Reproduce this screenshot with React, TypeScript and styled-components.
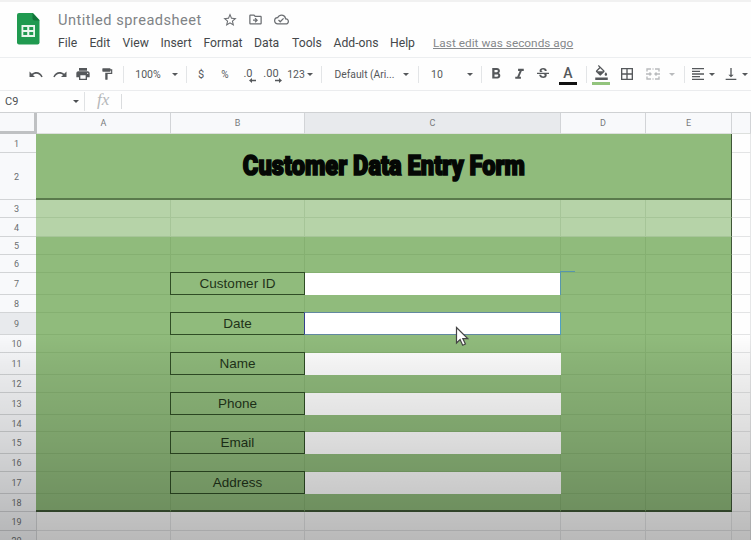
import React from 'react';
import styled, { createGlobalStyle, css } from 'styled-components';
import {
  MdPrint, MdFormatPaint, MdStarBorder, MdOutlineDriveFileMove, MdOutlineCloudDone,
  MdFormatBold, MdFormatItalic, MdStrikethroughS, MdFormatColorFill, MdBorderAll,
  MdFormatAlignLeft, MdVerticalAlignBottom,
} from 'react-icons/md';

const Global = createGlobalStyle`
  * { box-sizing: border-box; }
  body { margin: 0; background: #fff; overflow: hidden; font-family: Roboto, "Liberation Sans", sans-serif; }
`;

const Page = styled.div`
  position: relative;
  width: 751px;
  height: 540px;
  overflow: hidden;
  display: flex;
  flex-direction: column;
  background: #fefefe;
`;

const Header = styled.header`
  height: 58px;
  flex: none;
  display: flex;
  border-top: 2px solid #f1f1f1;
  border-bottom: 1px solid #eceef0;
`;
const LogoBox = styled.div`
  width: 58px;
  padding: 11px 0 0 17px;
`;
const HeaderText = styled.div`
  display: flex;
  flex-direction: column;
`;
const TitleRow = styled.div`
  display: flex;
  align-items: center;
  height: 25px;
  margin-top: 5px;
  color: #6b6e72;
`;
const DocTitle = styled.div`
  width: 164px;
  font-size: 14.6px;
  letter-spacing: 0.49px;
  color: #808386;
  white-space: nowrap;
`;
const TitleIcon = styled.span<{ $gap: number }>`
  display: flex;
  margin-right: ${p => p.$gap}px;
`;
const MenuRow = styled.nav`
  display: flex;
  height: 22px;
  align-items: center;
  font-size: 12.2px;
  color: #45484b;
`;
const MenuItem = styled.div<{ $w: number }>`
  width: ${p => p.$w}px;
  white-space: nowrap;
`;
const LastEdit = styled.div`
  font-size: 11.8px;
  letter-spacing: 0.02px;
  white-space: nowrap;
  color: #85888b;
  text-decoration: underline;
`;

const Toolbar = styled.div`
  height: 33px;
  flex: none;
  display: flex;
  align-items: center;
  padding-left: 24px;
  border-bottom: 1px solid #ebecee;
`;
const Slot = styled.div<{ $w: number; $size?: number; $faint?: boolean; $gap?: number }>`
  flex: none;
  width: ${p => p.$w}px;
  margin-left: ${p => p.$gap ?? 0}px;
  height: 30px;
  display: flex;
  align-items: center;
  justify-content: center;
  white-space: nowrap;
  font-size: ${p => p.$size ?? 11}px;
  color: ${p => (p.$faint ? '#b9bbbd' : '#55585b')};
  svg { flex: none; }
`;
const Separator = styled(Slot)`
  &::before { content: ''; width: 1px; height: 17px; background: #e3e5e7; }
`;
const Caret = styled.i`
  border: 3px solid transparent;
  border-top: 3.5px solid currentColor;
  border-bottom: 0;
`;
const Swatched = styled.div<{ $color: string }>`
  width: 18px;
  height: 21px;
  margin-top: 1px;
  display: flex;
  justify-content: center;
  align-items: center;
  font-size: 14px;
  font-weight: 500;
  padding-bottom: 1px;
  border-bottom: 3px solid ${p => p.$color};
`;
const Decimal = styled.div`
  display: flex;
  flex-direction: column;
  align-items: flex-end;
  line-height: 10px;
  padding-top: 4px;
  svg { margin: -1px -3px 0 0; }
`;

const FormulaBar = styled.div`
  height: 21px;
  flex: none;
  display: flex;
  align-items: center;
  font-size: 11px;
  color: #4c4f52;
`;
const NameBox = styled.div`
  width: 85px;
  height: 19px;
  display: flex;
  align-items: center;
  justify-content: space-between;
  padding: 0 5px 0 5px;
  border-right: 1px solid #e0e2e4;
`;
const Fx = styled.div`
  width: 37px;
  height: 15px;
  padding-left: 12px;
  border-right: 1px solid #dadcde;
  font: italic 17px/12px "Liberation Serif", serif;
  color: #b5b7b9;
`;

const COLUMNS = '37px 134px 134px 256px 85px 86px 19px';
const ColumnHeads = styled.div`
  height: 22px;
  flex: none;
  display: grid;
  grid-template-columns: ${COLUMNS};
  border-top: 1px solid #cfd1d3;
  background: #f8f9fb;
`;
const ColumnHead = styled.div<{ $active?: boolean; $corner?: boolean }>`
  display: flex;
  align-items: center;
  justify-content: center;
  font-size: 9px;
  color: #77797c;
  border-right: 1px solid #d2d4d7;
  border-bottom: 1px solid #dde0dd;
  ${p => p.$active && css`background: #e8eaed;`}
  ${p => p.$corner && css`border-right: 3px solid #bfc1c3; border-bottom: 3px solid #bfc1c3;`}
`;

const Sheet = styled.div`
  flex: none;
  display: grid;
  grid-template-columns: ${COLUMNS};
  grid-template-rows: 19px 47px 18px 19px 18px 18px 22px 18px 22px 18px 22px 18px 22px 17px 22px 18px 22px 18px 19px 19px;
`;
const RowHead = styled.div<{ $row: number; $active?: boolean }>`
  grid-column: 1;
  grid-row: ${p => p.$row};
  display: flex;
  align-items: center;
  justify-content: center;
  padding: 1px 3px 0 0;
  font-size: 9px;
  color: #6b6e70;
  background: ${p => (p.$active ? '#e8eaed' : '#f8f9fb')};
  border-bottom: 1px solid #d2d4d6;
  border-right: 1px solid #d8dadc;
`;
const FILLS = { green: '#90bb7c', light: '#b6d3a8', none: '#fefefe' };
const Cell = styled.div<{ $row: number; $col: number; $fill: keyof typeof FILLS }>`
  grid-column: ${p => p.$col};
  grid-row: ${p => p.$row};
  background: ${p => FILLS[p.$fill]};
  border-right: 1px solid ${p => (p.$fill === 'none' ? '#e6e7e8' : 'rgba(55, 95, 45, .12)')};
  border-bottom: 1px solid ${p => (p.$fill === 'none' ? '#e3e4e5' : 'rgba(55, 95, 45, .12)')};
  ${p => p.$col === 2 && p.$fill !== 'none' && css`margin-left: -1px;`}
  ${p => p.$col === 6 && p.$fill !== 'none' && css`border-right: 1.5px solid #3f5737;`}
  ${p => p.$row === 18 && p.$fill !== 'none' && css`border-bottom: 2px solid #3f5836;`}
`;
const Banner = styled.div`
  grid-column: 2 / 7;
  grid-row: 1 / 3;
  display: flex;
  align-items: center;
  justify-content: center;
  margin-left: -1px;
  background: #90bb7c;
  border-bottom: 2px solid #5a7a4c;
  border-right: 1.5px solid #3f5737;
`;
const BannerText = styled.h1`
  margin: 0 -20px;
  font: 900 28px/32px Roboto, "Liberation Sans", sans-serif;
  color: #050805;
  white-space: nowrap;
  -webkit-text-stroke: 1.7px #050805;
  transform: scaleX(0.845);
`;
const LabelCell = styled.div<{ $row: number }>`
  grid-column: 3;
  grid-row: ${p => p.$row};
  display: flex;
  align-items: center;
  justify-content: center;
  margin: -1px 0 0 -1px;
  border: 1.5px solid #2f4d25;
  background: #90bb7c;
  font: 13.5px "Liberation Sans", Arial, sans-serif;
  color: #1f3319;
`;
const InputCell = styled.div<{ $row: number; $selected?: boolean }>`
  grid-column: 4;
  grid-row: ${p => p.$row};
  margin-right: 1px;
  background: #fff;
  ${p => p.$selected && css`
    z-index: 1;
    margin: -1px 0 0 -1px;
    border: 1.5px solid #6288a0;
    border-left-color: #34418c;
    border-right-color: #4e9fc4;
  `}
`;
const SelectionTrace = styled.div`
  grid-column: 5;
  grid-row: 7;
  z-index: 1;
  width: 15px;
  margin: -2px 0 0 -1px;
  border-top: 1px solid #5796ac;
  border-left: 1px solid #5796ac;
`;
const Pointer = styled.svg`
  position: absolute;
  z-index: 3;
  left: 455px;
  top: 326px;
`;
const Shade = styled.div`
  position: absolute;
  inset: 335px 0 0 0;
  z-index: 2;
  background: linear-gradient(rgba(0,0,0,0), rgba(0,0,0,.055) 15%, rgba(0,0,0,.14) 52%, rgba(0,0,0,.25) 92%, rgba(0,0,0,.27));
  pointer-events: none;
`;

const menus: [string, number][] = [
  ['File', 31.5], ['Edit', 33], ['View', 38], ['Insert', 43], ['Format', 50.5],
  ['Data', 38], ['Tools', 41.5], ['Add-ons', 56.5], ['Help', 43],
];
const fields: Record<number, string> = {
  7: 'Customer ID', 9: 'Date', 11: 'Name', 13: 'Phone', 15: 'Email', 17: 'Address',
};
const rows = Array.from({ length: 20 }, (_, i) => i + 1);

const SheetsLogo = () => (
  <svg width="23" height="32" viewBox="0 0 23 32">
    <path d="M2 0h14l6.500 7v22.500a2 2 0 0 1-2 2H2a2 2 0 0 1-2-2V2a2 2 0 0 1 2-2z" fill="#209a50" />
    <path d="M15.500 0l7 7.500H17.500a2 2 0 0 1-2-2z" fill="#12733a" />
    <path d="M4.500 12h13.500v12H4.500zM6.300 14v3h3.900v-3zm6 0v3h3.900v-3zm-6 5v3h3.900v-3zm6 0v3h3.900v-3z" fill="#e9f6ed" fillRule="evenodd" />
  </svg>
);
const ArcArrow = ({ flip }: { flip?: boolean }) => (
  <svg width="14" height="9" viewBox="0 0 14 9" transform={flip ? 'scale(-1 1)' : undefined}>
    <path d="M.5 1.500v5.500h5.500L3.900 4.900C6.800 2.700 10.700 3.400 12.300 7.300l1.400-.5C11.800 1.700 6.600.5 2.800 3.800z" fill="currentColor" />
  </svg>
);
const SmallArrow = ({ right }: { right?: boolean }) => (
  <svg width="7" height="5" viewBox="0 0 7 5" transform={right ? 'scale(-1 1)' : undefined}>
    <path d="M0 2.500L3 0v1.800h4v1.400H3V5z" fill="currentColor" />
  </svg>
);
const MergeIcon = () => (
  <svg width="14" height="12" viewBox="0 0 14 12" fill="none" stroke="currentColor" strokeWidth="1.400">
    <path d="M1 3.500V1h4M9 1h4v2.500M1 8.500V11h4M9 11h4V8.500M0 6h5M9 6h5M3.500 4.500L5 6 3.500 7.500M10.500 4.500L9 6l1.500 1.500M6.500 1h1M6.500 11h1" />
  </svg>
);

const Arrow = ({ w, gap, faint }: { w: number; gap?: number; faint?: boolean }) => (
  <Slot $w={w} $gap={gap} $faint={faint}><Caret /></Slot>
);

export default function App() {
  return (
    <Page>
      <Global />
      <Header>
        <LogoBox><SheetsLogo /></LogoBox>
        <HeaderText>
          <TitleRow>
            <DocTitle>Untitled spreadsheet</DocTitle>
            <TitleIcon $gap={10}><MdStarBorder size={16} /></TitleIcon>
            <TitleIcon $gap={11}><MdOutlineDriveFileMove size={15} /></TitleIcon>
            <TitleIcon $gap={0}><MdOutlineCloudDone size={15} /></TitleIcon>
          </TitleRow>
          <MenuRow>
            {menus.map(([name, w]) => <MenuItem key={name} $w={w}>{name}</MenuItem>)}
            <LastEdit>Last edit was seconds ago</LastEdit>
          </MenuRow>
        </HeaderText>
      </Header>

      <Toolbar>
        <Slot $w={24}><ArcArrow /></Slot>
        <Slot $w={23}><ArcArrow flip /></Slot>
        <Slot $w={24}><MdPrint size={16} /></Slot>
        <Slot $w={24}><MdFormatPaint size={14} /></Slot>
        <Separator $w={8} />
        <Slot $w={42} $size={10.5}>100%</Slot>
        <Arrow w={12} />
        <Separator $w={10} />
        <Slot $w={20}>$</Slot>
        <Slot $w={28} $size={10}>%</Slot>
        <Slot $w={18}><Decimal>.0<SmallArrow /></Decimal></Slot>
        <Slot $w={28}><Decimal>.00<SmallArrow right /></Decimal></Slot>
        <Slot $w={22} $size={10.5}>123</Slot>
        <Arrow w={6} />
        <Separator $w={16} />
        <Slot $w={71} $size={10.3}>Default (Ari...</Slot>
        <Arrow w={12} />
        <Separator $w={12} />
        <Slot $w={26} $size={10.5}>10</Slot>
        <Arrow w={12} gap={14} />
        <Separator $w={10} />
        <Slot $w={20}><MdFormatBold size={18} /></Slot>
        <Slot $w={26}><MdFormatItalic size={17} /></Slot>
        <Slot $w={22}><MdStrikethroughS size={16} /></Slot>
        <Slot $w={28}><Swatched $color="#111">A</Swatched></Slot>
        <Separator $w={8} />
        <Slot $w={22}><Swatched $color="#93c47d"><MdFormatColorFill size={15} /></Swatched></Slot>
        <Slot $w={30}><MdBorderAll size={16} /></Slot>
        <Slot $w={22} $faint><MergeIcon /></Slot>
        <Arrow w={16} faint />
        <Separator $w={8} />
        <Slot $w={20}><MdFormatAlignLeft size={16} /></Slot>
        <Arrow w={8} />
        <Slot $w={18} $gap={6}><MdVerticalAlignBottom size={16} /></Slot>
        <Arrow w={10} />
      </Toolbar>

      <FormulaBar>
        <NameBox>C9<Caret /></NameBox>
        <Fx>fx</Fx>
      </FormulaBar>

      <ColumnHeads>
        <ColumnHead $corner />
        {['A', 'B', 'C', 'D', 'E', ''].map(c => <ColumnHead key={c} $active={c === 'C'}>{c}</ColumnHead>)}
      </ColumnHeads>

      <Sheet>
        {rows.map(r => <RowHead key={r} $row={r} $active={r === 9}>{r}</RowHead>)}
        <Banner><BannerText>Customer Data Entry Form</BannerText></Banner>
        {rows.map(r =>
          [2, 3, 4, 5, 6, 7].map(c => {
            if (r < 3 && c < 7) return null;
            const fill = c === 7 || r > 18 ? 'none' : r < 5 ? 'light' : 'green';
            if (fields[r] && c === 3) return <LabelCell key={c} $row={r}>{fields[r]}</LabelCell>;
            if (fields[r] && c === 4) return <InputCell key={c} $row={r} $selected={r === 9} />;
            return <Cell key={c} $row={r} $col={c} $fill={fill} />;
          }),
        )}
        <SelectionTrace />
      </Sheet>

      <Shade />
      <Pointer width="14" height="21" viewBox="0 0 14 21">
        <path d="M1.500 1.500v15.500l3.600-3.400 2.600 5.600 2.700-1.200-2.600-5.400h4.900z" fill="#fff" stroke="#444" strokeWidth="1.200" />
      </Pointer>
    </Page>
  );
}
